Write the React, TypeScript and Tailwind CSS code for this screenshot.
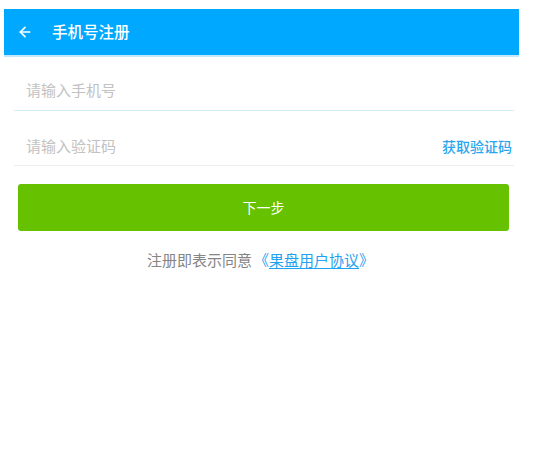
import { ArrowLeft } from "lucide-react";

const font = { fontFamily: '"Noto Sans CJK SC", "Noto Sans", sans-serif' };

export default function App() {
  return (
    <div className="min-h-[459px] w-[558px] bg-white pt-[9px]" style={font} lang="zh-CN">
      <div className="ml-1 w-[515px] bg-white">
        <div className="flex h-[46px] items-center bg-[#00a8ff] pl-[13px] text-white">
          <ArrowLeft size={16} strokeWidth={2.6} />
          <span className="ml-[19px] text-[15.5px] font-medium leading-none">手机号注册</span>
        </div>
        <div className="h-[2px] bg-[#c4e8fb]" />

        <div className="ml-[10px] mr-[5px] border-b border-[#d2ecfb] pb-[12px] pl-3 pt-[25px]">
          <input
            className="block w-full bg-transparent text-[15px] leading-4 text-[#333] placeholder:text-[#c2c2c2] outline-none"
            placeholder="请输入手机号"
          />
        </div>

        <div className="ml-[10px] mr-[5px] flex items-center border-b border-[#ececec] pb-[11px] pl-3 pr-[2px] pt-[27px]">
          <input
            className="block min-w-0 flex-1 bg-transparent text-[15px] leading-4 text-[#333] placeholder:text-[#c2c2c2] outline-none"
            placeholder="请输入验证码"
          />
          <button className="text-[14px] font-medium leading-4 text-[#2aa6ee]">获取验证码</button>
        </div>

        <button className="ml-[14px] mt-[18px] flex h-[47px] w-[491px] items-center justify-center rounded-[3px] bg-[#66c200] text-[14px] text-white">
          下一步
        </button>

        <p className="mt-[21px] text-center text-[15px] leading-[15px] text-[#858585]">
          注册即表示同意
          <span className="text-[#1fa3f0]">
            <span className="inline-block w-[17px] text-right">《</span>
            <span className="underline underline-offset-2">果盘用户协议</span>
            <span className="inline-block w-[17px] text-left">》</span>
          </span>
        </p>
      </div>
    </div>
  );
}
